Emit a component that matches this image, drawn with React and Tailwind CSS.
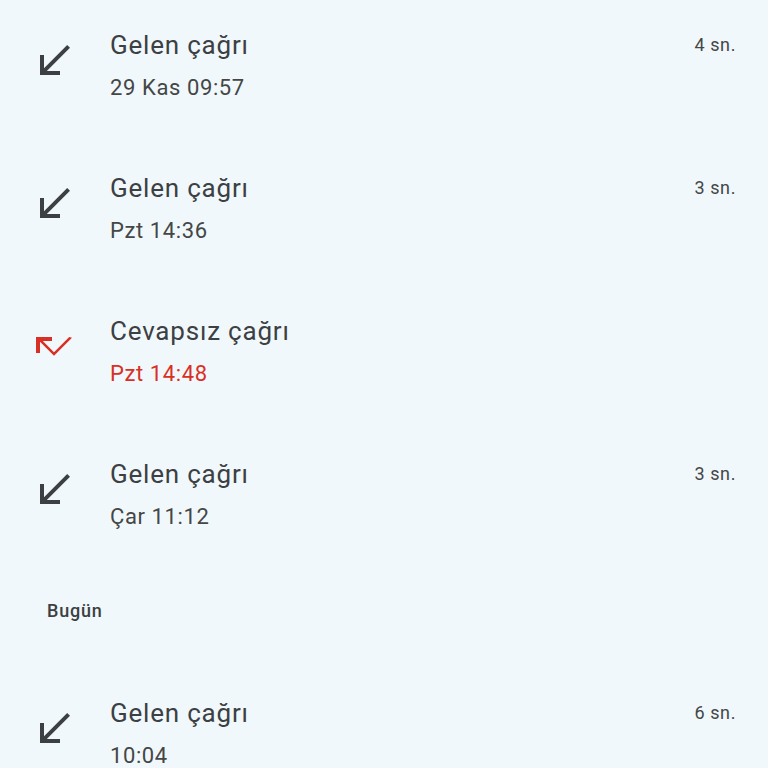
import React from 'react';

const calls = [
  { title: 'Gelen çağrı', time: '29 Kas 09:57', dur: '4 sn.' },
  { title: 'Gelen çağrı', time: 'Pzt 14:36', dur: '3 sn.' },
  { title: 'Cevapsız çağrı', time: 'Pzt 14:48', missed: true },
  { title: 'Gelen çağrı', time: 'Çar 11:12', dur: '3 sn.' },
];

const today = [{ title: 'Gelen çağrı', time: '10:04', dur: '6 sn.' }];

function ReceivedIcon() {
  return (
    <svg width="48" height="48" viewBox="0 0 24 24" fill="#3c4043">
      <path d="M20 5.41L18.59 4 7 15.59V9H5v10h10v-2H8.41z" />
    </svg>
  );
}

function MissedIcon() {
  return (
    <svg width="48" height="48" viewBox="0 0 24 24" fill="#d93025">
      <path d="M19.59 7L12 14.59 6.41 9H11V7H3v8h2V9.41l7 7 9-9z" />
    </svg>
  );
}

function CallRow({ call }) {
  return (
    <div className="flex items-center h-[143px]">
      <div className="w-[110px] pl-[30px] mb-[10px] flex items-center">
        {call.missed ? <MissedIcon /> : <ReceivedIcon />}
      </div>
      <div className="flex-1 flex flex-col gap-[13px]">
        <div className="flex items-start justify-between">
          <span className="text-[26px] leading-[32px] tracking-[0.8px] text-[#3c4043]">{call.title}</span>
          {call.dur && (
            <span className="text-[18px] leading-[32px] tracking-[0.6px] text-[#444746] pr-[32px]">{call.dur}</span>
          )}
        </div>
        <span
          className={`text-[22px] leading-[28px] tracking-[0.6px] ${call.missed ? 'text-[#d93025]' : 'text-[#444746]'}`}
        >
          {call.time}
        </span>
      </div>
    </div>
  );
}

export default function App() {
  return (
    <div className="w-[768px] h-[768px] overflow-hidden bg-[#f1f8fc] font-['Roboto',sans-serif]">
      <div className="-mt-[6px]">
        {calls.map((c, i) => (
          <CallRow key={i} call={c} />
        ))}
        <div className="h-[96px] flex items-center pl-[47px] pb-[8px]">
          <span className="text-[18px] font-medium tracking-[0.8px] text-[#3c4043]">Bugün</span>
        </div>
        {today.map((c, i) => (
          <CallRow key={i} call={c} />
        ))}
      </div>
    </div>
  );
}
